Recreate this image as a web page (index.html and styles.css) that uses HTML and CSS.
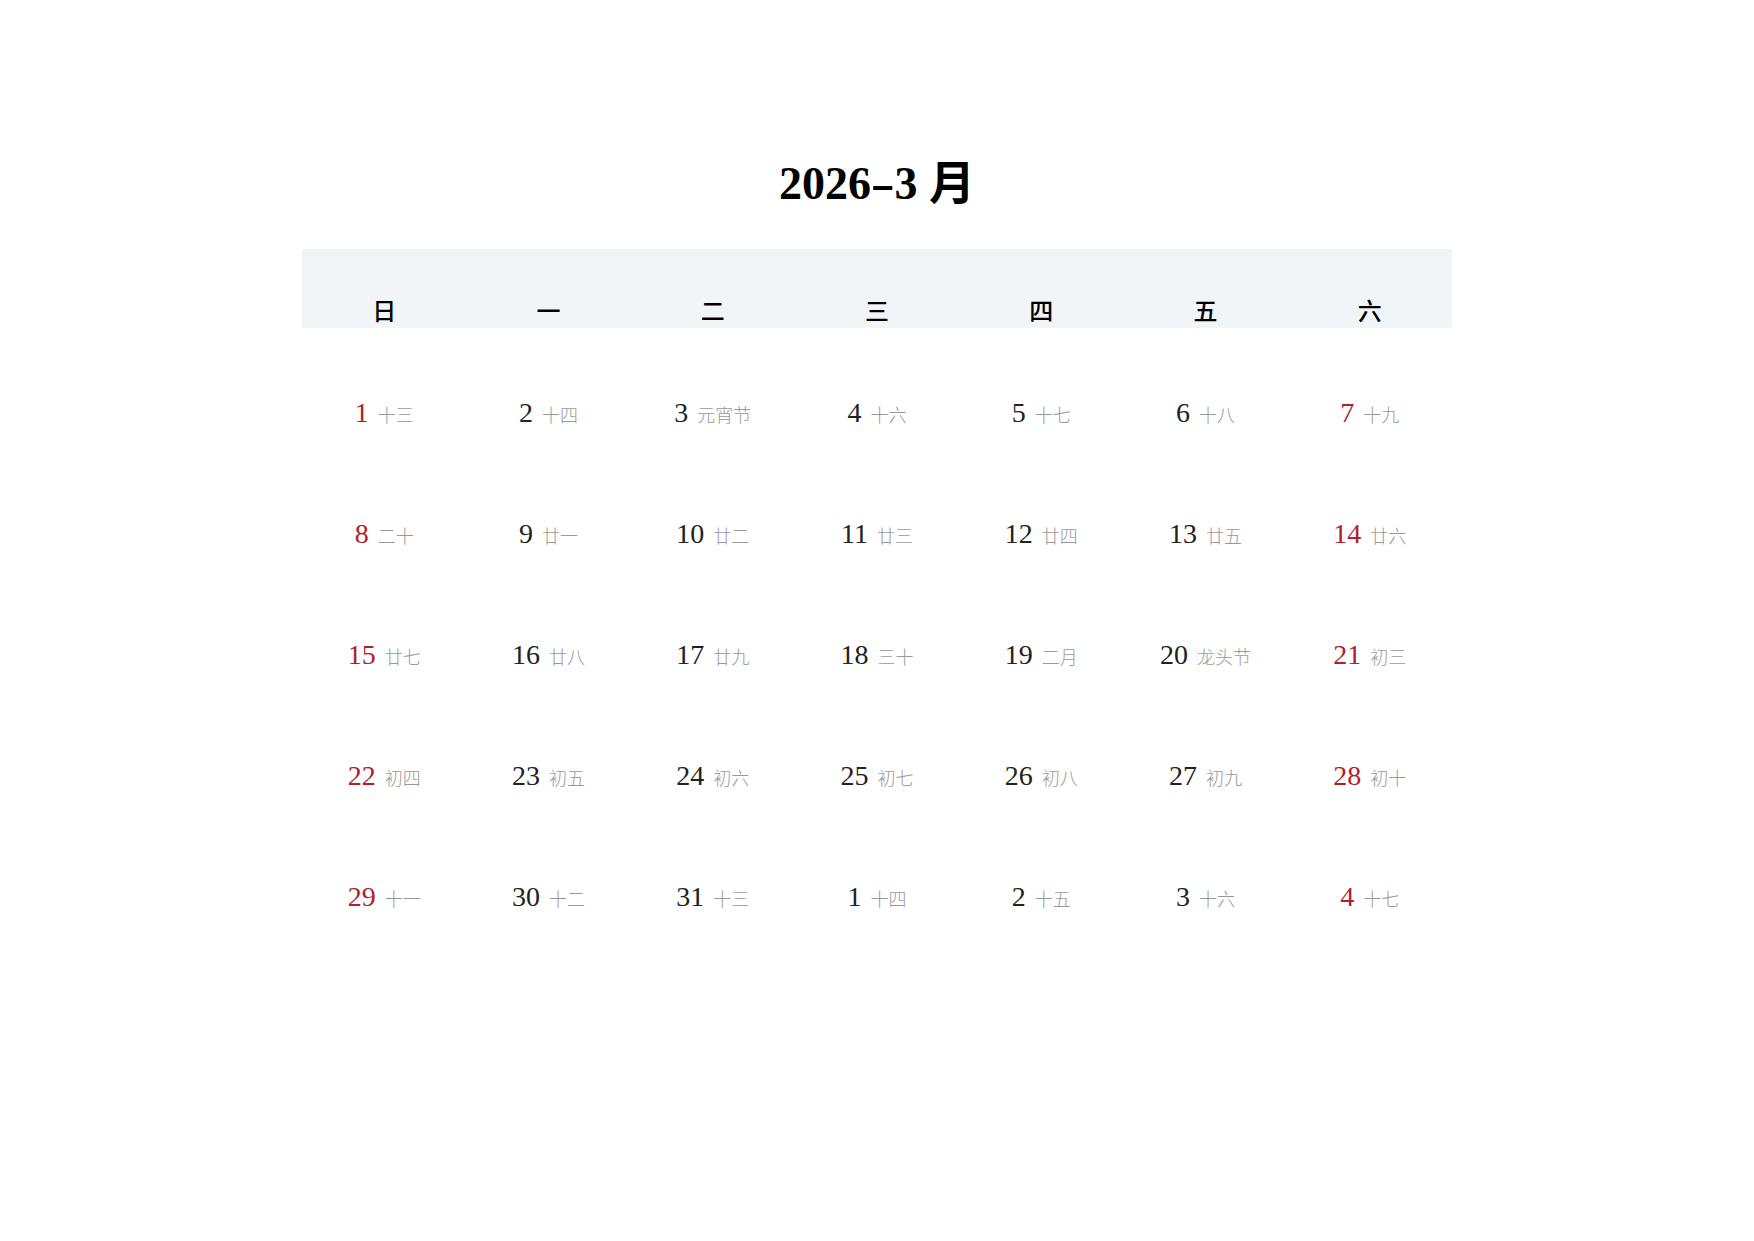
FILE: index.html
```html
<!DOCTYPE html>
<html lang="zh-CN">
<head>
    <meta charset="UTF-8">
    <title>2026-3 月</title>
    <link rel="stylesheet" href="styles.css">
</head>
<body>
    <h1 class="title">2026<span class="dash">-</span>3 月</h1>
    <div class="calendar">
        <div class="week-head">
            <div>日</div><div>一</div><div>二</div><div>三</div><div>四</div><div>五</div><div>六</div>
        </div>
        <div class="days">
            <div class="day"><span class="num red">1</span><span class="lunar">十三</span></div>
            <div class="day"><span class="num">2</span><span class="lunar">十四</span></div>
            <div class="day"><span class="num">3</span><span class="lunar">元宵节</span></div>
            <div class="day"><span class="num">4</span><span class="lunar">十六</span></div>
            <div class="day"><span class="num">5</span><span class="lunar">十七</span></div>
            <div class="day"><span class="num">6</span><span class="lunar">十八</span></div>
            <div class="day"><span class="num red">7</span><span class="lunar">十九</span></div>

            <div class="day"><span class="num red">8</span><span class="lunar">二十</span></div>
            <div class="day"><span class="num">9</span><span class="lunar">廿一</span></div>
            <div class="day"><span class="num">10</span><span class="lunar">廿二</span></div>
            <div class="day"><span class="num">11</span><span class="lunar">廿三</span></div>
            <div class="day"><span class="num">12</span><span class="lunar">廿四</span></div>
            <div class="day"><span class="num">13</span><span class="lunar">廿五</span></div>
            <div class="day"><span class="num red">14</span><span class="lunar">廿六</span></div>

            <div class="day"><span class="num red">15</span><span class="lunar">廿七</span></div>
            <div class="day"><span class="num">16</span><span class="lunar">廿八</span></div>
            <div class="day"><span class="num">17</span><span class="lunar">廿九</span></div>
            <div class="day"><span class="num">18</span><span class="lunar">三十</span></div>
            <div class="day"><span class="num">19</span><span class="lunar">二月</span></div>
            <div class="day"><span class="num">20</span><span class="lunar">龙头节</span></div>
            <div class="day"><span class="num red">21</span><span class="lunar">初三</span></div>

            <div class="day"><span class="num red">22</span><span class="lunar">初四</span></div>
            <div class="day"><span class="num">23</span><span class="lunar">初五</span></div>
            <div class="day"><span class="num">24</span><span class="lunar">初六</span></div>
            <div class="day"><span class="num">25</span><span class="lunar">初七</span></div>
            <div class="day"><span class="num">26</span><span class="lunar">初八</span></div>
            <div class="day"><span class="num">27</span><span class="lunar">初九</span></div>
            <div class="day"><span class="num red">28</span><span class="lunar">初十</span></div>

            <div class="day"><span class="num red">29</span><span class="lunar">十一</span></div>
            <div class="day"><span class="num">30</span><span class="lunar">十二</span></div>
            <div class="day"><span class="num">31</span><span class="lunar">十三</span></div>
            <div class="day"><span class="num">1</span><span class="lunar">十四</span></div>
            <div class="day"><span class="num">2</span><span class="lunar">十五</span></div>
            <div class="day"><span class="num">3</span><span class="lunar">十六</span></div>
            <div class="day"><span class="num red">4</span><span class="lunar">十七</span></div>
        </div>
    </div>
</body>
</html>
```

FILE: styles.css
```css
body { margin: 0; background: #fff; color: #111; font-family: "Liberation Serif", "Noto Sans CJK SC", serif; }
.title { margin: 0; padding-top: 154px; height: 60px; line-height: 60px; text-align: center; font-size: 46px; font-weight: bold; color: #000; }
.title .dash { display: inline-block; transform: scaleX(1.6); margin: 0 4px; }
.calendar { width: 1150px; margin: 35px 0 0 302px; }
.week-head { display: grid; grid-template-columns: repeat(7, 1fr); height: 79px; background-color: #f2f5f8; align-items: end; }
.week-head div { text-align: center; font-family: "Noto Sans CJK SC", sans-serif; font-size: 24px; font-weight: 500; line-height: 30px; padding-bottom: 3px; color: #000; }
.days { display: grid; grid-template-columns: repeat(7, 1fr); grid-auto-rows: 121px; padding-top: 25px; }
.day { display: flex; align-items: baseline; justify-content: center; gap: 9px; padding-top: 44px; }
.num { font-size: 28px; color: #222; }
.num.red { color: #b0202a; }
.lunar { font-family: "Noto Sans CJK SC", sans-serif; font-size: 18px; font-weight: 300; color: #999; }
```
